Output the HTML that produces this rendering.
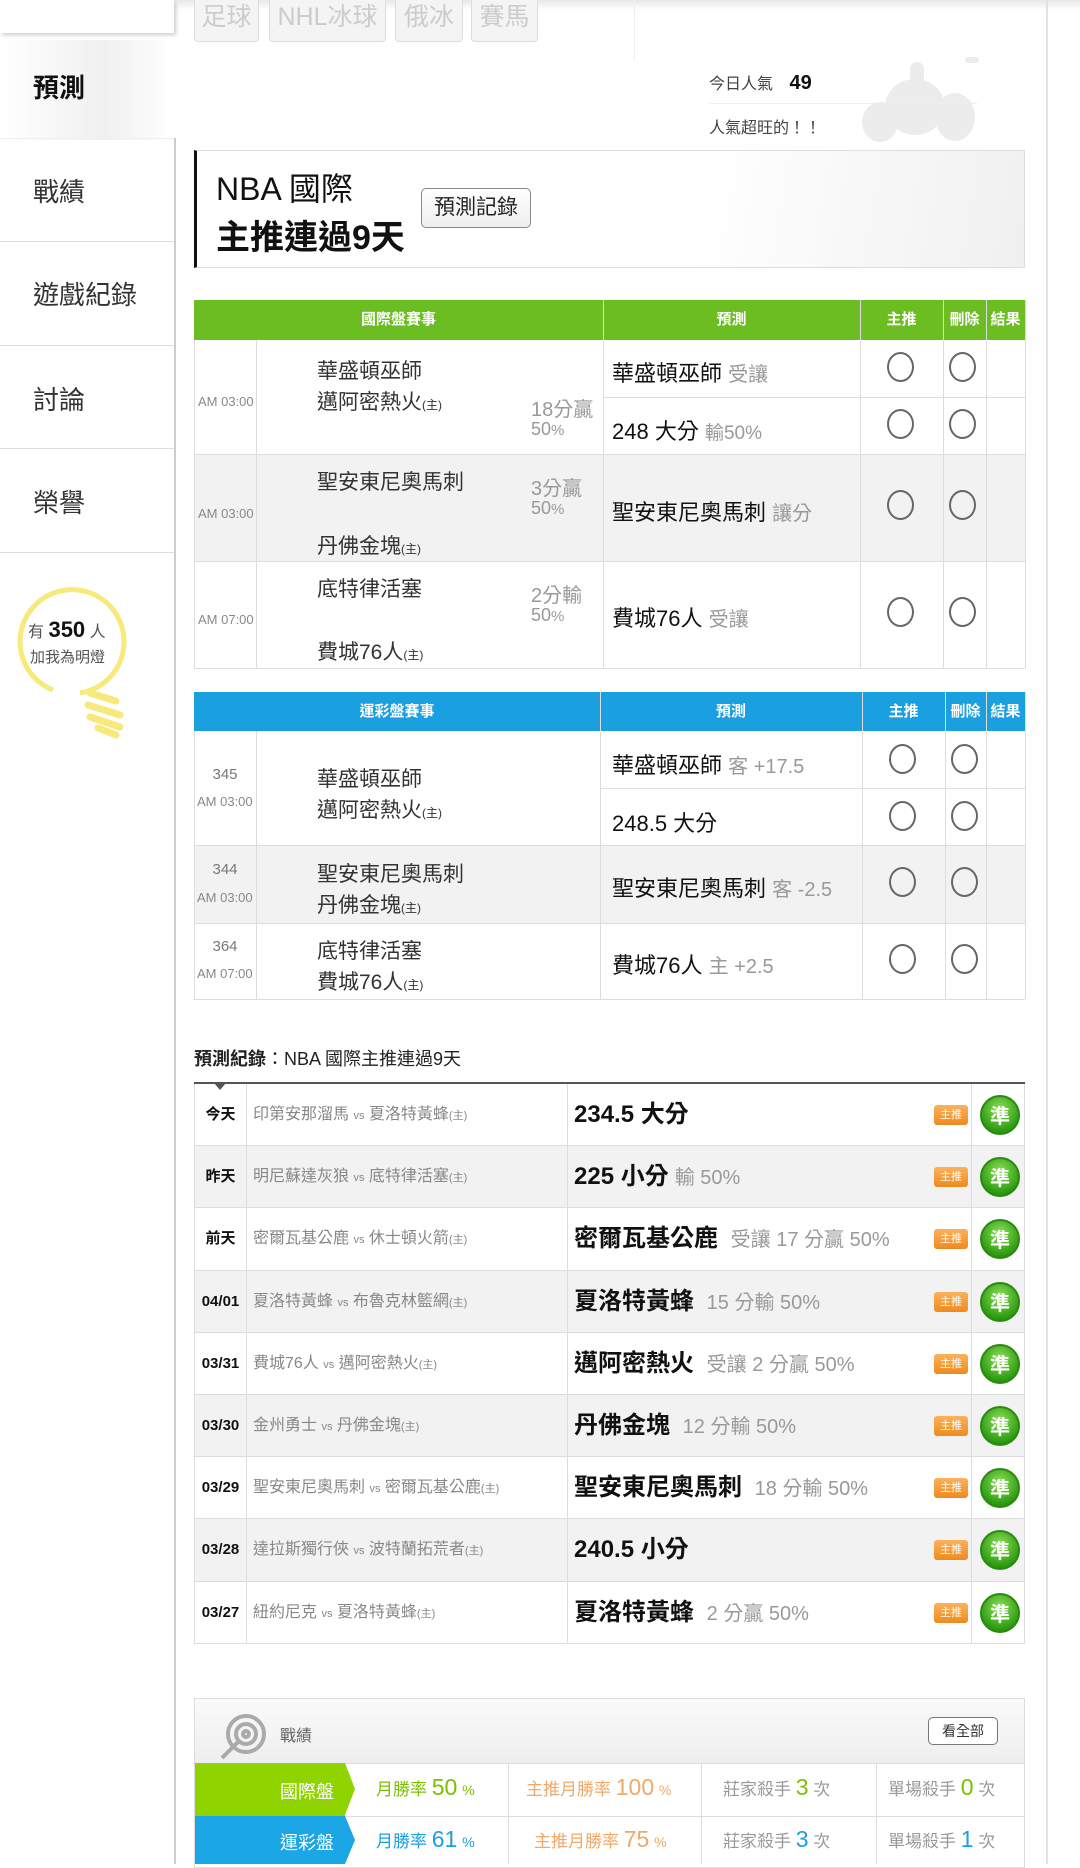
<!DOCTYPE html>
<html><head><meta charset="utf-8">
<style>
*{margin:0;padding:0;box-sizing:border-box}
body{width:1080px;height:1864px;position:relative;overflow:hidden;background:#fff;font-family:"Liberation Sans","Noto Sans CJK TC",sans-serif;color:#333}
.a{position:absolute;white-space:nowrap}
.hl{position:absolute;height:1px;background:#ddd}
.vl{position:absolute;width:1px;background:#ddd}
.c{position:absolute;width:27px;height:30px;border:2px solid #666;border-radius:50%}
.g{color:#999}
.sm{font-size:13px;color:#888}
.rec{position:absolute;left:194px;width:831px;height:62.2px;border-bottom:1px solid #ddd;border-left:1px solid #ddd;border-right:1px solid #ddd}
.rec .d{position:absolute;left:0;width:52px;top:0;bottom:0;border-right:1px solid #ddd;font-size:15px;font-weight:bold;color:#111;line-height:62px;text-align:center}
.rec .m{position:absolute;left:58px;line-height:62px;font-size:16px;color:#888}
.rec .m small{font-size:11px}
.rec .p{position:absolute;left:372px;top:0;bottom:0;border-left:1px solid #ddd;padding-left:6px;line-height:62px;font-size:24px;font-weight:bold;color:#111}
.rec .p span{font-weight:normal;color:#999;font-size:20px;margin-left:6px}
.rec .b{position:absolute;left:739px;top:21px;width:34px;height:20px;background:linear-gradient(#fbb25a,#ee8a1e);border-radius:3px;color:#fff;font-size:11px;text-align:center;line-height:20px}
.rec .z{position:absolute;left:776px;top:0;bottom:0;border-left:1px solid #ddd;width:54px}
.rec .z i{position:absolute;left:8px;top:11px;width:40px;height:40px;border-radius:50%;background:radial-gradient(circle at 50% 35%,#8fe05a,#2f9d12 70%,#1d7a08);color:#fff;font-style:normal;font-weight:bold;font-size:20px;text-align:center;line-height:40px;border:2px solid #2a8a10}
.gray{background:#f2f2f2}
</style></head><body>

<div class="a" style="left:0;top:0;width:1080px;height:10px;background:linear-gradient(#e8e8e8,#fff)"></div>
<div class="a" style="left:0;top:0;width:174px;height:33px;background:#fff;box-shadow:2px 2px 4px #ccc"></div>
<div class="a" style="left:0;top:40px;width:174px;height:100px;background:linear-gradient(90deg,#fff 0%,#f0f0f0 60%,#fff 100%)"></div>
<div class="vl" style="left:174px;top:138px;height:1726px;background:#ccc;width:2px"></div>
<div class="a" style="left:33px;top:68px;font-size:26px;font-weight:bold;color:#111">預測</div>
<div class="hl" style="left:0;top:138px;width:174px;background:#eee"></div>
<div class="hl" style="left:0;top:241px;width:174px"></div>
<div class="hl" style="left:0;top:345px;width:174px"></div>
<div class="hl" style="left:0;top:448px;width:174px"></div>
<div class="hl" style="left:0;top:552px;width:174px"></div>
<div class="a" style="left:33px;top:172px;font-size:26px">戰績</div>
<div class="a" style="left:33px;top:275px;font-size:26px">遊戲紀錄</div>
<div class="a" style="left:33px;top:380px;font-size:26px">討論</div>
<div class="a" style="left:33px;top:483px;font-size:26px">榮譽</div>
<svg class="a" style="left:8px;top:585px" width="130" height="160" viewBox="0 0 130 160">
<path d="M72 108 A52 52 0 1 0 45 105" fill="none" stroke="#f7e97a" stroke-width="5"/>
<g stroke="#f7e97a" stroke-width="7" stroke-linecap="round"><line x1="82" y1="108" x2="108" y2="116"/><line x1="80" y1="120" x2="112" y2="130"/><line x1="82" y1="132" x2="112" y2="142"/><line x1="90" y1="143" x2="108" y2="150"/></g>
</svg>
<div class="a" style="left:28px;top:617px;font-size:16px;color:#555">有 <b style="font-size:22px;color:#111">350</b> 人</div>
<div class="a" style="left:30px;top:646px;font-size:15px;color:#555">加我為明燈</div>

<div class="a" style="left:194px;top:-6px;width:65px;height:48px;background:#f4f4f4;border:1px solid #ddd;border-radius:4px;color:#ccc;font-size:25px;text-align:center;line-height:44px">足球</div>
<div class="a" style="left:269px;top:-6px;width:117px;height:48px;background:#f4f4f4;border:1px solid #ddd;border-radius:4px;color:#ccc;font-size:25px;text-align:center;line-height:44px">NHL冰球</div>
<div class="a" style="left:395px;top:-6px;width:68px;height:48px;background:#f4f4f4;border:1px solid #ddd;border-radius:4px;color:#ccc;font-size:25px;text-align:center;line-height:44px">俄冰</div>
<div class="a" style="left:471px;top:-6px;width:67px;height:48px;background:#f4f4f4;border:1px solid #ddd;border-radius:4px;color:#ccc;font-size:25px;text-align:center;line-height:44px">賽馬</div>
<div class="vl" style="left:634px;top:0;height:60px;background:#eee"></div>
<div class="vl" style="left:1046px;top:0;height:1864px;background:#e2e2e2;width:2px"></div>

<svg class="a" style="left:855px;top:52px" width="130" height="90" viewBox="0 0 130 90"><g fill="#ececec"><ellipse cx="60" cy="55" rx="30" ry="28"/><ellipse cx="25" cy="70" rx="18" ry="20"/><ellipse cx="100" cy="65" rx="20" ry="24"/><rect x="55" y="10" width="14" height="40" rx="7"/><rect x="110" y="5" width="14" height="6" rx="3"/></g></svg>
<div class="a" style="left:709px;top:70px;font-size:16px;color:#444">今日人氣 <b style="font-size:20px;color:#111;margin-left:12px">49</b></div>
<div class="hl" style="left:709px;top:103px;width:268px;background:#eee"></div>
<div class="a" style="left:709px;top:114px;font-size:16px;color:#444">人氣超旺的！！</div>

<div class="a" style="left:194px;top:150px;width:831px;height:118px;border:1px solid #ddd;border-left:3px solid #111;background:linear-gradient(100deg,#fff 60%,#f0f0f0 100%)"></div>
<div class="a" style="left:216px;top:164px;font-size:32px;color:#111">NBA 國際</div>
<div class="a" style="left:216px;top:210px;font-size:34px;font-weight:bold;color:#111">主推連過9天</div>
<div class="a" style="left:421px;top:188px;width:110px;height:40px;border:1px solid #888;border-radius:5px;background:linear-gradient(#fff,#eee);font-size:21px;text-align:center;line-height:38px;color:#222">預測記錄</div>

<div class="a" style="left:194px;top:300px;width:831px;height:40px;background:#6cbd22"></div>
<div class="a" style="left:194px;top:300px;width:409px;line-height:40px;text-align:center;color:#fff;font-weight:bold;font-size:15px">國際盤賽事</div>
<div class="a" style="left:603px;top:300px;width:257px;line-height:40px;text-align:center;color:#fff;font-weight:bold;font-size:15px">預測</div>
<div class="a" style="left:860px;top:300px;width:83px;line-height:40px;text-align:center;color:#fff;font-weight:bold;font-size:15px">主推</div>
<div class="a" style="left:943px;top:300px;width:43px;line-height:40px;text-align:center;color:#fff;font-weight:bold;font-size:15px">刪除</div>
<div class="a" style="left:986px;top:300px;width:39px;line-height:40px;text-align:center;color:#fff;font-weight:bold;font-size:15px">結果</div>
<div class="a gray" style="left:194px;top:454px;width:831px;height:107px"></div>
<div class="hl" style="left:194px;top:454px;width:831px"></div>
<div class="hl" style="left:194px;top:561px;width:831px"></div>
<div class="hl" style="left:194px;top:668px;width:831px"></div>
<div class="hl" style="left:603px;top:397px;width:422px"></div>
<div class="vl" style="left:194px;top:340px;height:328px"></div>
<div class="vl" style="left:256px;top:340px;height:328px"></div>
<div class="vl" style="left:603px;top:300px;height:368px"></div>
<div class="vl" style="left:860px;top:300px;height:368px"></div>
<div class="vl" style="left:943px;top:300px;height:368px"></div>
<div class="vl" style="left:986px;top:300px;height:368px"></div>
<div class="vl" style="left:1025px;top:300px;height:368px"></div>

<div class="a sm" style="left:198px;top:394px">AM 03:00</div>
<div class="a" style="left:317px;top:355px;font-size:21px">華盛頓巫師</div>
<div class="a" style="left:317px;top:386px;font-size:21px">邁阿密熱火<span style="font-size:12px">(主)</span></div>
<div class="a g" style="left:531px;top:393px;font-size:20px">18分贏</div>
<div class="a g" style="left:531px;top:419px;font-size:18px">50<small>%</small></div>
<div class="a" style="left:612px;top:356px;font-size:22px;color:#111">華盛頓巫師 <span class="g" style="font-size:20px">受讓</span></div>
<div class="a" style="left:612px;top:414px;font-size:22px;color:#111">248 大分 <span class="g" style="font-size:19px">輸50%</span></div>
<div class="c" style="left:887px;top:352px"></div><div class="c" style="left:949px;top:352px"></div>
<div class="c" style="left:887px;top:409px"></div><div class="c" style="left:949px;top:409px"></div>

<div class="a sm" style="left:198px;top:506px">AM 03:00</div>
<div class="a" style="left:317px;top:466px;font-size:21px">聖安東尼奧馬刺</div>
<div class="a" style="left:317px;top:530px;font-size:21px">丹佛金塊<span style="font-size:12px">(主)</span></div>
<div class="a g" style="left:531px;top:472px;font-size:20px">3分贏</div>
<div class="a g" style="left:531px;top:498px;font-size:18px">50<small>%</small></div>
<div class="a" style="left:612px;top:495px;font-size:22px;color:#111">聖安東尼奧馬刺 <span class="g" style="font-size:20px">讓分</span></div>
<div class="c" style="left:887px;top:490px"></div><div class="c" style="left:949px;top:490px"></div>

<div class="a sm" style="left:198px;top:612px">AM 07:00</div>
<div class="a" style="left:317px;top:573px;font-size:21px">底特律活塞</div>
<div class="a" style="left:317px;top:636px;font-size:21px">費城76人<span style="font-size:12px">(主)</span></div>
<div class="a g" style="left:531px;top:579px;font-size:20px">2分輸</div>
<div class="a g" style="left:531px;top:605px;font-size:18px">50<small>%</small></div>
<div class="a" style="left:612px;top:601px;font-size:22px;color:#111">費城76人 <span class="g" style="font-size:20px">受讓</span></div>
<div class="c" style="left:887px;top:597px"></div><div class="c" style="left:949px;top:597px"></div>

<div class="a" style="left:194px;top:692px;width:831px;height:39px;background:#1a9fe0"></div>
<div class="a" style="left:194px;top:692px;width:406px;line-height:39px;text-align:center;color:#fff;font-weight:bold;font-size:15px">運彩盤賽事</div>
<div class="a" style="left:600px;top:692px;width:262px;line-height:39px;text-align:center;color:#fff;font-weight:bold;font-size:15px">預測</div>
<div class="a" style="left:862px;top:692px;width:83px;line-height:39px;text-align:center;color:#fff;font-weight:bold;font-size:15px">主推</div>
<div class="a" style="left:945px;top:692px;width:41px;line-height:39px;text-align:center;color:#fff;font-weight:bold;font-size:15px">刪除</div>
<div class="a" style="left:986px;top:692px;width:39px;line-height:39px;text-align:center;color:#fff;font-weight:bold;font-size:15px">結果</div>
<div class="a gray" style="left:194px;top:845px;width:831px;height:78px"></div>
<div class="hl" style="left:194px;top:845px;width:831px"></div>
<div class="hl" style="left:194px;top:923px;width:831px"></div>
<div class="hl" style="left:194px;top:999px;width:831px"></div>
<div class="hl" style="left:600px;top:788px;width:425px"></div>
<div class="vl" style="left:194px;top:731px;height:268px"></div>
<div class="vl" style="left:256px;top:731px;height:268px"></div>
<div class="vl" style="left:600px;top:692px;height:307px"></div>
<div class="vl" style="left:862px;top:692px;height:307px"></div>
<div class="vl" style="left:945px;top:692px;height:307px"></div>
<div class="vl" style="left:986px;top:692px;height:307px"></div>
<div class="vl" style="left:1025px;top:692px;height:307px"></div>

<div class="a" style="left:194px;top:766px;width:62px;text-align:center;font-size:15px;color:#777">345</div>
<div class="a sm" style="left:197px;top:794px">AM 03:00</div>
<div class="a" style="left:317px;top:763px;font-size:21px">華盛頓巫師</div>
<div class="a" style="left:317px;top:794px;font-size:21px">邁阿密熱火<span style="font-size:12px">(主)</span></div>
<div class="a" style="left:612px;top:748px;font-size:22px;color:#111">華盛頓巫師 <span class="g" style="font-size:20px">客 +17.5</span></div>
<div class="a" style="left:612px;top:806px;font-size:22px;color:#111">248.5 大分</div>
<div class="c" style="left:889px;top:744px"></div><div class="c" style="left:951px;top:744px"></div>
<div class="c" style="left:889px;top:801px"></div><div class="c" style="left:951px;top:801px"></div>

<div class="a" style="left:194px;top:861px;width:62px;text-align:center;font-size:15px;color:#777">344</div>
<div class="a sm" style="left:197px;top:890px">AM 03:00</div>
<div class="a" style="left:317px;top:858px;font-size:21px">聖安東尼奧馬刺</div>
<div class="a" style="left:317px;top:889px;font-size:21px">丹佛金塊<span style="font-size:12px">(主)</span></div>
<div class="a" style="left:612px;top:871px;font-size:22px;color:#111">聖安東尼奧馬刺 <span class="g" style="font-size:20px">客 -2.5</span></div>
<div class="c" style="left:889px;top:867px"></div><div class="c" style="left:951px;top:867px"></div>

<div class="a" style="left:194px;top:938px;width:62px;text-align:center;font-size:15px;color:#777">364</div>
<div class="a sm" style="left:197px;top:966px">AM 07:00</div>
<div class="a" style="left:317px;top:935px;font-size:21px">底特律活塞</div>
<div class="a" style="left:317px;top:966px;font-size:21px">費城76人<span style="font-size:12px">(主)</span></div>
<div class="a" style="left:612px;top:948px;font-size:22px;color:#111">費城76人 <span class="g" style="font-size:20px">主 +2.5</span></div>
<div class="c" style="left:889px;top:944px"></div><div class="c" style="left:951px;top:944px"></div>

<div class="a" style="left:194px;top:1045px;font-size:18px;color:#222"><b>預測紀錄</b>：NBA 國際主推連過9天</div>
<div class="a" style="left:194px;top:1082px;width:831px;height:2px;background:#555"></div>
<div class="a" style="left:214px;top:1083px;width:0;height:0;border-left:6px solid transparent;border-right:6px solid transparent;border-top:7px solid #555"></div>

<div class="rec" style="top:1084px"><div class="d">今天</div><div class="m">印第安那溜馬 <small>vs</small> 夏洛特黃蜂<small>(主)</small></div><div class="p">234.5 大分</div><div class="b">主推</div><div class="z"><i>準</i></div></div>
<div class="rec gray" style="top:1146.2px"><div class="d">昨天</div><div class="m">明尼蘇達灰狼 <small>vs</small> 底特律活塞<small>(主)</small></div><div class="p">225 小分<span>輸 50%</span></div><div class="b">主推</div><div class="z"><i>準</i></div></div>
<div class="rec" style="top:1208.4px"><div class="d">前天</div><div class="m">密爾瓦基公鹿 <small>vs</small> 休士頓火箭<small>(主)</small></div><div class="p">密爾瓦基公鹿 <span>受讓 17 分贏 50%</span></div><div class="b">主推</div><div class="z"><i>準</i></div></div>
<div class="rec gray" style="top:1270.6px"><div class="d">04/01</div><div class="m">夏洛特黃蜂 <small>vs</small> 布魯克林籃網<small>(主)</small></div><div class="p">夏洛特黃蜂 <span>15 分輸 50%</span></div><div class="b">主推</div><div class="z"><i>準</i></div></div>
<div class="rec" style="top:1332.8px"><div class="d">03/31</div><div class="m">費城76人 <small>vs</small> 邁阿密熱火<small>(主)</small></div><div class="p">邁阿密熱火 <span>受讓 2 分贏 50%</span></div><div class="b">主推</div><div class="z"><i>準</i></div></div>
<div class="rec gray" style="top:1395px"><div class="d">03/30</div><div class="m">金州勇士 <small>vs</small> 丹佛金塊<small>(主)</small></div><div class="p">丹佛金塊 <span>12 分輸 50%</span></div><div class="b">主推</div><div class="z"><i>準</i></div></div>
<div class="rec" style="top:1457.2px"><div class="d">03/29</div><div class="m">聖安東尼奧馬刺 <small>vs</small> 密爾瓦基公鹿<small>(主)</small></div><div class="p">聖安東尼奧馬刺 <span>18 分輸 50%</span></div><div class="b">主推</div><div class="z"><i>準</i></div></div>
<div class="rec gray" style="top:1519.4px"><div class="d">03/28</div><div class="m">達拉斯獨行俠 <small>vs</small> 波特蘭拓荒者<small>(主)</small></div><div class="p">240.5 小分</div><div class="b">主推</div><div class="z"><i>準</i></div></div>
<div class="rec" style="top:1581.6px"><div class="d">03/27</div><div class="m">紐約尼克 <small>vs</small> 夏洛特黃蜂<small>(主)</small></div><div class="p">夏洛特黃蜂 <span>2 分贏 50%</span></div><div class="b">主推</div><div class="z"><i>準</i></div></div>

<div class="a" style="left:194px;top:1698px;width:831px;height:170px;border:1px solid #ddd"></div>
<div class="a" style="left:195px;top:1699px;width:829px;height:64px;background:linear-gradient(#fafafa,#eee)"></div>
<svg class="a" style="left:218px;top:1712px" width="50" height="50" viewBox="0 0 50 50"><g fill="none" stroke="#aaa" stroke-width="4"><circle cx="28" cy="22" r="18"/><circle cx="28" cy="22" r="10"/><circle cx="28" cy="22" r="3"/></g><path d="M4 46 L20 30" stroke="#aaa" stroke-width="4"/></svg>
<div class="a" style="left:280px;top:1722px;font-size:16px;color:#666">戰績</div>
<div class="a" style="left:928px;top:1717px;width:70px;height:28px;border:1px solid #777;border-radius:5px;background:#fff;font-size:14px;text-align:center;line-height:26px;color:#333">看全部</div>
<div class="hl" style="left:194px;top:1763px;width:831px"></div>
<div class="hl" style="left:194px;top:1816px;width:831px"></div>
<div class="a" style="left:195px;top:1763px;width:150px;height:53px;background:#8fd400"></div>
<div class="a" style="left:345px;top:1763px;width:0;height:0;border-top:26.5px solid transparent;border-bottom:26.5px solid transparent;border-left:10px solid #8fd400"></div>
<div class="a" style="left:195px;top:1816px;width:150px;height:48px;background:#1ba6e6"></div>
<div class="a" style="left:345px;top:1816px;width:0;height:0;border-top:24px solid transparent;border-bottom:24px solid transparent;border-left:10px solid #1ba6e6"></div>
<div class="a" style="left:280px;top:1778px;font-size:18px;color:#fff">國際盤</div>
<div class="a" style="left:280px;top:1829px;font-size:18px;color:#fff">運彩盤</div>
<div class="vl" style="left:508px;top:1763px;height:101px"></div>
<div class="vl" style="left:701px;top:1763px;height:101px"></div>
<div class="vl" style="left:876px;top:1763px;height:101px"></div>
<div class="a" style="left:376px;top:1774px;font-size:17px;color:#7cbf00">月勝率 <span style="font-size:23px">50</span> <small>%</small></div>
<div class="a" style="left:526px;top:1774px;font-size:17px;color:#f0a868">主推月勝率 <span style="font-size:23px">100</span> <small>%</small></div>
<div class="a" style="left:723px;top:1774px;font-size:17px;color:#999">莊家殺手 <span style="font-size:23px;color:#7cbf00">3</span> 次</div>
<div class="a" style="left:888px;top:1774px;font-size:17px;color:#999">單場殺手 <span style="font-size:23px;color:#7cbf00">0</span> 次</div>
<div class="a" style="left:376px;top:1826px;font-size:17px;color:#1a9fe0">月勝率 <span style="font-size:23px">61</span> <small>%</small></div>
<div class="a" style="left:534px;top:1826px;font-size:17px;color:#f0a868">主推月勝率 <span style="font-size:23px">75</span> <small>%</small></div>
<div class="a" style="left:723px;top:1826px;font-size:17px;color:#999">莊家殺手 <span style="font-size:23px;color:#1a9fe0">3</span> 次</div>
<div class="a" style="left:888px;top:1826px;font-size:17px;color:#999">單場殺手 <span style="font-size:23px;color:#1a9fe0">1</span> 次</div>
</body></html>
